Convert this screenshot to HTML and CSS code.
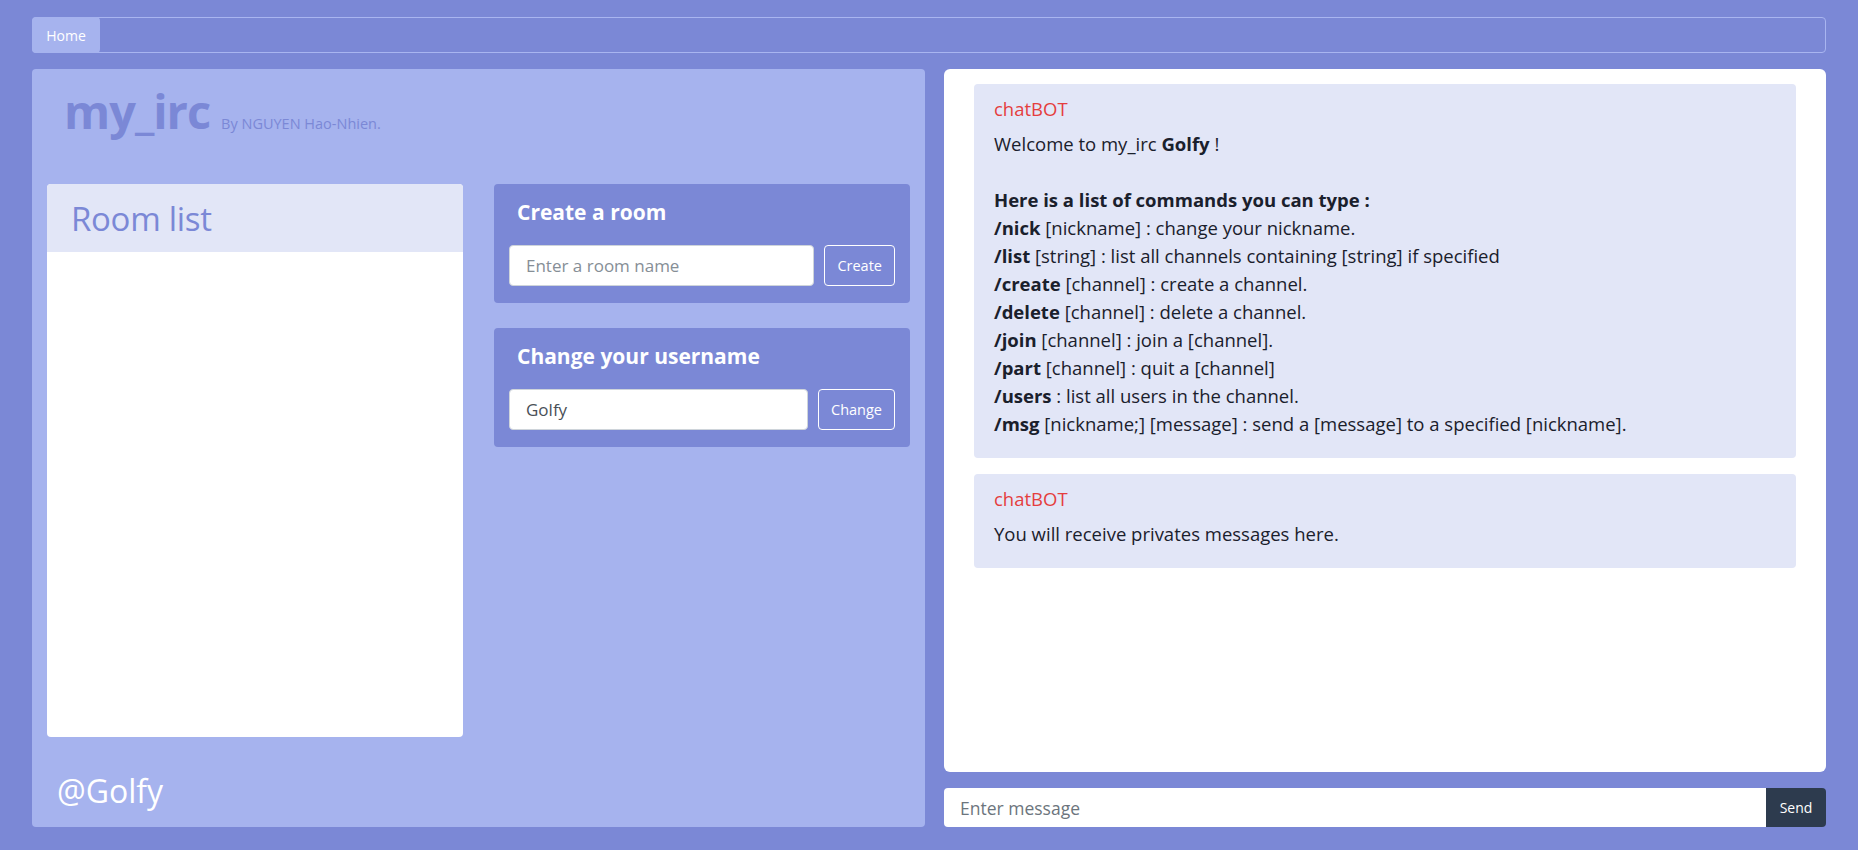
FILE: index.html
```html
<!DOCTYPE html>
<html lang="en">
<head>
<meta charset="utf-8">
<title>my_irc</title>
<link rel="stylesheet" href="styles.css">
</head>
<body>
<div class="page">
  <nav class="navbar"><a class="nav-home" href="#">Home</a></nav>
  <div class="main">
    <section class="left-panel">
      <header class="brand"><h1 class="brand-title">my_irc</h1><span class="brand-by">By NGUYEN Hao-Nhien.</span></header>
      <div class="left-grid">
        <div class="room-card">
          <div class="room-head"><h2 class="room-title">Room list</h2></div>
          <div class="room-body"></div>
        </div>
        <div class="forms">
          <div class="form-card">
            <h3 class="form-title">Create a room</h3>
            <div class="form-row"><input class="form-input" type="text" placeholder="Enter a room name"><button class="form-btn">Create</button></div>
          </div>
          <div class="form-card">
            <h3 class="form-title">Change your username</h3>
            <div class="form-row"><input class="form-input" type="text" value="Golfy"><button class="form-btn">Change</button></div>
          </div>
        </div>
      </div>
      <div class="user-tag">@Golfy</div>
    </section>
    <section class="right-col">
      <div class="chat-box">
        <div class="message">
          <div class="msg-author">chatBOT</div>
          <div class="msg-text">
            Welcome to my_irc <b>Golfy</b> !<br><br>
            <b>Here is a list of commands you can type :</b><br>
            <b>/nick</b> [nickname] : change your nickname.<br>
            <b>/list</b> [string] : list all channels containing [string] if specified<br>
            <b>/create</b> [channel] : create a channel.<br>
            <b>/delete</b> [channel] : delete a channel.<br>
            <b>/join</b> [channel] : join a [channel].<br>
            <b>/part</b> [channel] : quit a [channel]<br>
            <b>/users</b> : list all users in the channel.<br>
            <b>/msg</b> [nickname;] [message] : send a [message] to a specified [nickname].
          </div>
        </div>
        <div class="message">
          <div class="msg-author">chatBOT</div>
          <div class="msg-text">You will receive privates messages here.</div>
        </div>
      </div>
      <div class="msg-bar"><input class="msg-input" type="text" placeholder="Enter message"><button class="send-btn">Send</button></div>
    </section>
  </div>
</div>
</body>
</html>
```
FILE: styles.css
```css
* { box-sizing: border-box; }
html, body { margin: 0; height: 100%; }
body {
  background: #7b88d6;
  font-family: "Open Sans", "Noto Sans", sans-serif;
  color: #1a202c;
}
.page {
  height: 850px;
  padding: 17px 32px 23px;
  display: flex;
  flex-direction: column;
  gap: 16px;
}
.navbar {
  height: 36px;
  border: 1px solid #a9b5f0;
  border-radius: 4px;
  display: flex;
}
.nav-home {
  margin: -1px;
  width: 68px;
  height: 36px;
  background: #a6b3ee;
  border-radius: 4px;
  color: #fff;
  text-decoration: none;
  font-size: 14px;
  display: flex;
  align-items: center;
  justify-content: center;
}
.main {
  flex: 1;
  display: grid;
  grid-template-columns: 893px 882px;
  gap: 19px;
  min-height: 0;
}
.left-panel {
  background: #a6b3ee;
  border-radius: 4px;
  display: flex;
  flex-direction: column;
  padding-top: 14px;
}
.brand {
  display: flex;
  align-items: baseline;
  padding-left: 32px;
  height: 101px;
}
.brand-title {
  margin: 0;
  font-size: 47px;
  line-height: 57px;
  font-weight: 700;
  color: #7b88d6;
  letter-spacing: -1px;
}
.brand-by {
  margin-left: 11px;
  font-size: 14.5px;
  color: #7b88d6;
}
.left-grid {
  display: grid;
  grid-template-columns: 416px 416px;
  gap: 31px;
  padding: 0 15px;
}
.room-card {
  height: 553px;
  background: #fff;
  border-radius: 4px;
  overflow: hidden;
  display: flex;
  flex-direction: column;
}
.room-head {
  height: 68px;
  background: #e2e6f7;
  display: flex;
  align-items: center;
  padding-left: 24px;
}
.room-title {
  margin: 0;
  font-size: 33px;
  font-weight: 400;
  color: #7b88d6;
  letter-spacing: -0.3px;
}
.forms {
  display: flex;
  flex-direction: column;
  gap: 25px;
}
.form-card {
  background: #7b88d6;
  border-radius: 4px;
  padding: 13px 15px 17px;
}
.form-title {
  margin: 0 0 18px 8px;
  font-size: 21px;
  line-height: 30px;
  font-weight: 700;
  color: #fff;
}
.form-row {
  display: flex;
  gap: 10px;
}
.form-input {
  flex: 1;
  min-width: 0;
  height: 41px;
  border: 1px solid #ced4da;
  border-radius: 4px;
  padding: 0 16px;
  font-family: inherit;
  font-size: 17px;
  color: #495057;
  background: #fff;
}
.form-input::placeholder { color: #868e96; }
.form-btn {
  height: 41px;
  padding: 0 12px;
  background: transparent;
  border: 1px solid #fff;
  border-radius: 4px;
  color: #fff;
  font-family: inherit;
  font-size: 14.5px;
}
.user-tag {
  margin-top: 36px;
  padding-left: 25px;
  font-size: 32px;
  line-height: 36px;
  color: #fff;
}
.right-col {
  display: flex;
  flex-direction: column;
  gap: 16px;
  min-height: 0;
}
.chat-box {
  flex: 1;
  background: #fff;
  border-radius: 6px;
  padding: 15px 30px;
  display: flex;
  flex-direction: column;
  gap: 16px;
  overflow: hidden;
}
.message {
  background: #e2e6f7;
  border-radius: 4px;
  padding: 11px 20px 20px;
}
.msg-author {
  color: #e53e3e;
  font-size: 18.5px;
  line-height: 28px;
  margin-bottom: 7px;
}
.msg-text {
  font-size: 18.5px;
  line-height: 28px;
}
.msg-text b { font-weight: 700; }
.msg-bar {
  height: 39px;
  display: flex;
}
.msg-input {
  flex: 1;
  border: none;
  border-radius: 4px 0 0 4px;
  padding: 0 16px;
  font-family: inherit;
  font-size: 17.5px;
  background: #fff;
}
.msg-input::placeholder { color: #6c757d; }
.send-btn {
  width: 60px;
  border: none;
  border-radius: 0 4px 4px 0;
  background: #2d3b4e;
  color: #fff;
  font-family: inherit;
  font-size: 14px;
}
```
